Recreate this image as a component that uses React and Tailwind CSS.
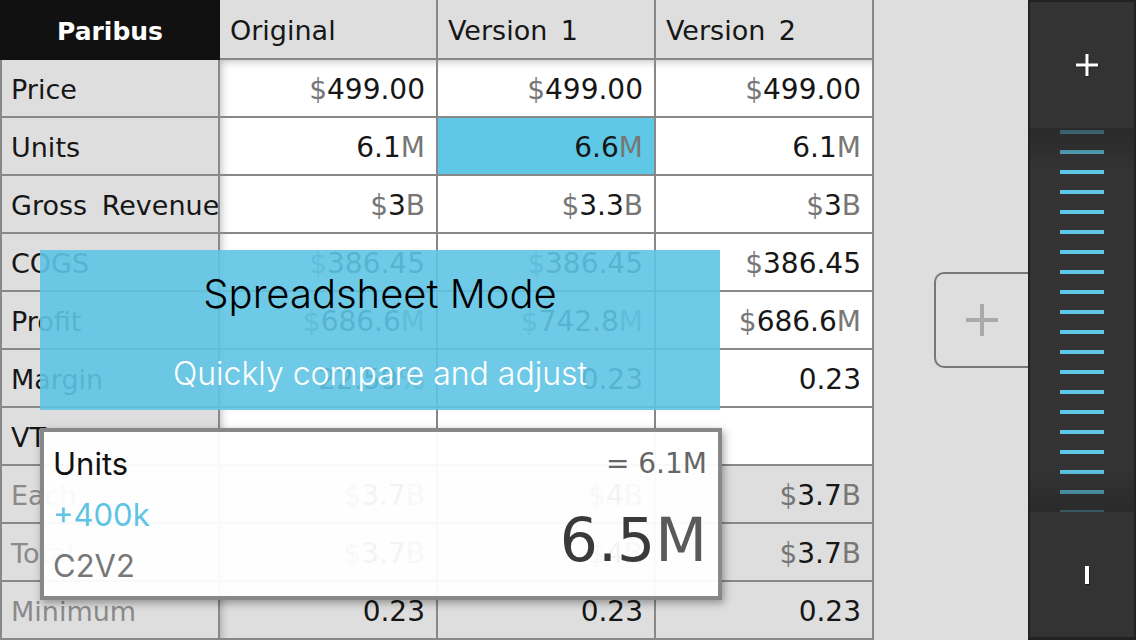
import React from 'react';

const TABLE_FONT = { fontFamily: '"DejaVu Sans", Verdana, sans-serif' };
const UI_FONT = { fontFamily: 'Inter, "Liberation Sans", Arial, sans-serif' };

const columns = ['Original', 'Version 1', 'Version 2'];

// p = gray prefix, v = number, s = gray suffix
const rows = [
  { label: 'Price', cells: [{ p: '$', v: '499.00' }, { p: '$', v: '499.00' }, { p: '$', v: '499.00' }] },
  { label: 'Units', cells: [{ v: '6.1', s: 'M' }, { v: '6.6', s: 'M', active: true }, { v: '6.1', s: 'M' }] },
  { label: 'Gross Revenue', cells: [{ p: '$', v: '3', s: 'B' }, { p: '$', v: '3.3', s: 'B' }, { p: '$', v: '3', s: 'B' }] },
  { label: 'COGS', cells: [{ p: '$', v: '386.45' }, { p: '$', v: '386.45' }, { p: '$', v: '386.45' }] },
  { label: 'Profit', cells: [{ p: '$', v: '686.6', s: 'M' }, { p: '$', v: '742.8', s: 'M' }, { p: '$', v: '686.6', s: 'M' }] },
  { label: 'Margin', cells: [{ v: '22.59', s: '%' }, { v: '0.23' }, { v: '0.23' }] },
  { label: 'VT', cells: [{}, {}, {}] },
  { label: 'Each', muted: true, cells: [{ p: '$', v: '3.7', s: 'B' }, { p: '$', v: '4', s: 'B' }, { p: '$', v: '3.7', s: 'B' }] },
  { label: 'Total', muted: true, cells: [{ p: '$', v: '3.7', s: 'B' }, { p: '$', v: '4', s: 'B' }, { p: '$', v: '3.7', s: 'B' }] },
  { label: 'Minimum', muted: true, cells: [{ v: '0.23' }, { v: '0.23' }, { v: '0.23' }] },
];

const Value = ({ cell }) => (
  <span>
    {cell.p && <span className="text-[#777]">{cell.p}</span>}
    <span className="text-[#161616]">{cell.v}</span>
    {cell.s && <span className="text-[#777]">{cell.s}</span>}
  </span>
);

const Sheet = () => (
  <div
    className="grid grid-cols-[216px_216px_216px_216px] grid-rows-[58px_repeat(10,56px)] gap-[2px] bg-[#888] px-[2px] pb-[2px] w-[874px] h-[640px] shrink-0"
    style={TABLE_FONT}
  >
    <div className="-ml-[2px] -mr-[2px] -mb-[2px] bg-[#111] text-white font-bold text-[25px] flex items-center justify-center pt-[4px]">
      Paribus
    </div>
    {columns.map((c) => (
      <div key={c} className="bg-[#dedede] text-[#161616] text-[27px] [word-spacing:5px] flex items-center pl-[10px] pt-[5px]">
        {c}
      </div>
    ))}

    {rows.map((row, ri) => (
      <React.Fragment key={row.label}>
        <div
          className={`bg-[#dedede] text-[27px] [word-spacing:6px] flex items-center pl-[9px] pt-[4px] overflow-hidden whitespace-nowrap ${
            row.muted ? 'text-[#8a8a8a]' : 'text-[#161616]'
          }`}
        >
          {row.label}
        </div>
        {row.cells.map((cell, ci) => {
          let bg = row.muted ? 'bg-[#dedede]' : 'bg-white';
          if (cell.active) bg = 'bg-[#5ec8e6]';
          let shadow = '';
          if (ri === 0 && ci === 0) shadow = 'shadow-[inset_9px_9px_8px_-8px_rgba(0,0,0,0.28)]';
          else if (ri === 0) shadow = 'shadow-[inset_0_9px_8px_-8px_rgba(0,0,0,0.28)]';
          else if (ci === 0) shadow = 'shadow-[inset_9px_0_8px_-8px_rgba(0,0,0,0.28)]';
          return (
            <div key={ci} className={`${bg} ${shadow} text-[28px] flex items-center justify-end pr-[11px] pt-[4px] whitespace-nowrap`}>
              {cell.v && <Value cell={cell} />}
            </div>
          );
        })}
      </React.Fragment>
    ))}
  </div>
);

const Stepper = () => (
  <div className="w-[108px] h-[640px] shrink-0 bg-[#222] p-[2px] pb-[3px] flex flex-col">
    <div className="h-[126px] bg-[#333] flex items-center justify-center">
      <svg className="ml-[10px] w-[22px] h-[22px] drop-shadow-[1px_1px_0_rgba(0,0,0,0.4)]" viewBox="0 0 22 22">
        <path d="M11 0v22M0 11h22" stroke="white" strokeWidth="3" />
      </svg>
    </div>
    <div className="h-[384px] bg-[#333] relative overflow-hidden">
      <div className="flex flex-col items-center gap-[16px] pt-[2px]">
        {Array.from({ length: 20 }).map((_, i) => (
          <div key={i} className="w-[44px] h-[4px] bg-[#5ec8e6] shrink-0" />
        ))}
      </div>
      <div className="absolute inset-x-0 top-0 h-[44px] bg-gradient-to-b from-[#262626]/70 to-transparent" />
      <div className="absolute inset-x-0 bottom-0 h-[44px] bg-gradient-to-t from-[#262626]/70 to-transparent" />
    </div>
    <div className="flex-1 bg-[#333] flex items-center justify-center">
      <div className="ml-[10px] w-[4px] h-[18px] bg-white shadow-[1px_1px_0_rgba(0,0,0,0.4)]" />
    </div>
  </div>
);

export default function App() {
  return (
    <div className="w-[1136px] h-[640px] overflow-hidden relative flex bg-[#dedede]">
      <Sheet />

      <div className="flex-1 flex items-center justify-end">
        <div className="w-[94px] h-[96px] border-2 border-r-0 border-[#777] rounded-l-[10px] flex items-center justify-center">
          <svg className="w-[32px] h-[32px]" viewBox="0 0 32 32">
            <path d="M16 0v32M0 16h32" stroke="#aaa" strokeWidth="4" />
          </svg>
        </div>
      </div>

      <Stepper />

      {/* onboarding banner */}
      <div
        className="absolute left-[40px] top-[250px] w-[680px] h-[160px] bg-[#5ec4e4]/90 flex flex-col items-center"
        style={UI_FONT}
      >
        <div className="mt-[24px] text-[40px] leading-none font-light text-black">Spreadsheet Mode</div>
        <div className="mt-[44px] text-[32px] leading-none font-light text-white">Quickly compare and adjust</div>
      </div>

      {/* edit popover */}
      <div className="absolute left-[40px] top-[428px] w-[682px] h-[172px] bg-white/95 border-[4px] border-[#888] shadow-[2px_3px_8px_rgba(0,0,0,0.35)] flex justify-between pl-[9px] pr-[11px] pt-[6px]">
        <div className="flex flex-col text-[31px] leading-[51px]" style={UI_FONT}>
          <div className="text-[#111]">Units</div>
          <div className="text-[#5ec4e4]">+400k</div>
          <div className="text-[#777]">C2V2</div>
        </div>
        <div className="flex flex-col items-end" style={TABLE_FONT}>
          <div className="text-[28px] leading-[51px] text-[#666]">= 6.1M</div>
          <div className="mt-[21px] text-[60px] leading-[60px] text-[#3a3a3a]">
            6.5<span className="text-[#5a5a5a]">M</span>
          </div>
        </div>
      </div>
    </div>
  );
}
